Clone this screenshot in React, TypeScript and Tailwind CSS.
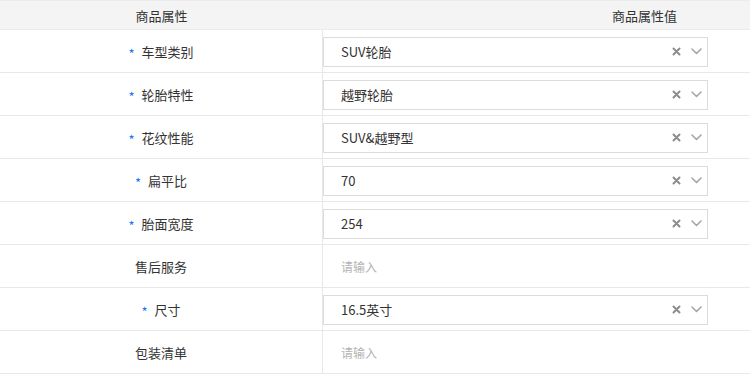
import React from "react";

type Row = { label: string; required: boolean; value?: string };

const rows: Row[] = [
  { label: "车型类别", required: true, value: "SUV轮胎" },
  { label: "轮胎特性", required: true, value: "越野轮胎" },
  { label: "花纹性能", required: true, value: "SUV&越野型" },
  { label: "扁平比", required: true, value: "70" },
  { label: "胎面宽度", required: true, value: "254" },
  { label: "售后服务", required: false },
  { label: "尺寸", required: true, value: "16.5英寸" },
  { label: "包装清单", required: false },
];

function ClearIcon() {
  return (
    <svg width="9" height="9" viewBox="0 0 9 9">
      <path d="M1.5 1.5 L7.5 7.5 M7.5 1.5 L1.5 7.5" stroke="#8c8c8c" strokeWidth="2" strokeLinecap="round" />
    </svg>
  );
}

function ChevronIcon() {
  return (
    <svg width="11" height="7" viewBox="0 0 11 7">
      <path d="M1 1 L5.5 5.5 L10 1" stroke="#a6a6a6" strokeWidth="1.6" fill="none" strokeLinecap="round" strokeLinejoin="round" />
    </svg>
  );
}

export default function App() {
  return (
    <div
      className="w-[750px] h-[376px] bg-white overflow-hidden text-[13px] text-[#333]"
      style={{ fontFamily: '"Noto Sans CJK SC", "Noto Sans", sans-serif' }}
    >
      <div className="border-t border-[#ececec] border-b bg-[#f4f4f4] h-[30px] flex items-center">
        <div className="w-[323px] text-center leading-none">商品属性</div>
        <div className="flex-1 pl-[289px] leading-none">商品属性值</div>
      </div>
      {rows.map((r) => (
        <div key={r.label} className="flex h-[43px] border-b border-[#e8e8e8]">
          <div className="w-[323px] border-r border-[#e8e8e8] flex items-center justify-center leading-none">
            {r.required && <span className="text-[#1677ff] mr-[7px] relative top-[2px]">*</span>}
            <span>{r.label}</span>
          </div>
          <div className="flex-1 flex items-center pt-[1px]">
            {r.value ? (
              <div className="w-[385px] h-[30px] border border-[#dcdcdc] flex items-center pl-[17px] pr-[5px]">
                <span className="flex-1 leading-none">{r.value}</span>
                <span className="flex items-center gap-[10px]">
                  <ClearIcon />
                  <ChevronIcon />
                </span>
              </div>
            ) : (
              <div className="pl-[18px] text-[12px] text-[#b3b3b3] leading-none">请输入</div>
            )}
          </div>
        </div>
      ))}
    </div>
  );
}
